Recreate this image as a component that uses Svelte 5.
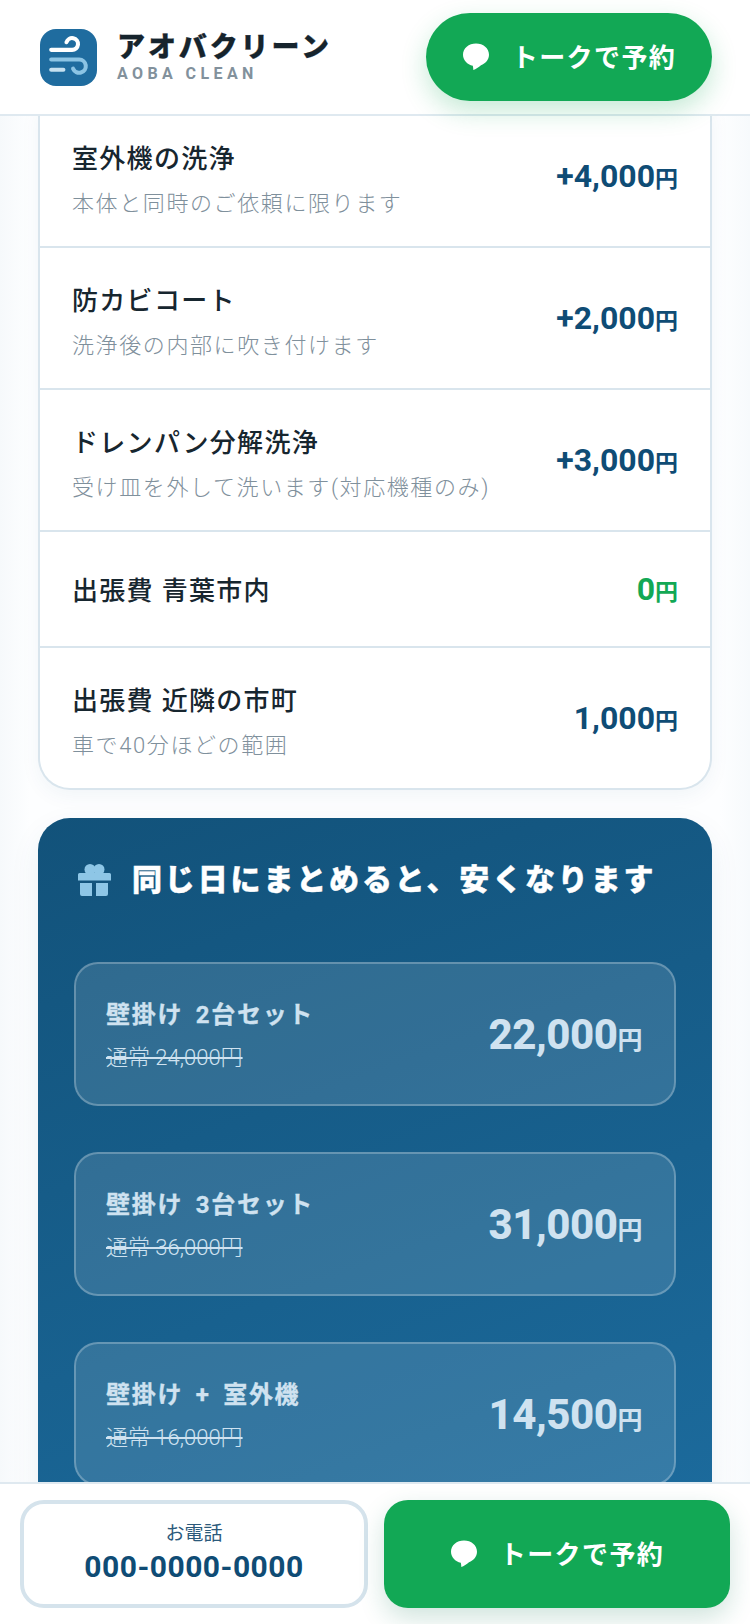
<script lang="ts">
	const options = [
		{ name: '室外機の洗浄', note: '本体と同時のご依頼に限ります', price: '+4,000' },
		{ name: '防カビコート', note: '洗浄後の内部に吹き付けます', price: '+2,000' },
		{ name: 'ドレンパン分解洗浄', note: '受け皿を外して洗います(対応機種のみ)', price: '+3,000' },
		{ name: '出張費 青葉市内', note: '', price: '0', free: true },
		{ name: '出張費 近隣の市町', note: '車で40分ほどの範囲', price: '1,000' }
	];

	const sets = [
		{ name: '壁掛け 2台セット', regular: '通常 24,000円', price: '22,000' },
		{ name: '壁掛け 3台セット', regular: '通常 36,000円', price: '31,000' },
		{ name: '壁掛け + 室外機', regular: '通常 16,000円', price: '14,500' }
	];
</script>

{#snippet talkIcon()}
	<svg class="talk-icon" viewBox="0 0 28 28" aria-hidden="true">
		<path d="M14 .5C6.800.5 1 5.300 1 11.700c0 5.500 4.200 9.800 9.800 11 .4 1.300.5 3 .5 4.300 2.600-1 5.300-2.800 7.700-4.800C23.500 20.500 27 16.500 27 11.700 27 5.300 21.200.5 14 .5z" fill="#fff" />
	</svg>
{/snippet}

<div class="page">
	<header class="top">
		<div class="brand">
			<div class="logo">
				<svg viewBox="0 0 56 56" fill="none" stroke-linecap="round" stroke-width="4" aria-hidden="true">
					<path d="M11 20.500H31.500a5.800 5.800 0 1 0-5.500-7.500" stroke="#fff" />
					<path d="M11 30H38.500a6.500 6.500 0 1 1-6 9" stroke="#8cc4e4" />
					<path d="M11 40H23" stroke="#c5e0f0" />
				</svg>
			</div>
			<div class="brand-text">
				<div class="brand-name">アオバクリーン</div>
				<div class="brand-sub">AOBA CLEAN</div>
			</div>
		</div>
		<button class="talk talk-pill">
			{@render talkIcon()}
			<span>トークで予約</span>
		</button>
	</header>

	<main>
		<section class="options">
			{#each options as opt}
				<div class="option">
					<div class="option-text" class:noted={opt.note}>
						<div class="option-name">{opt.name}</div>
						{#if opt.note}
							<div class="option-note">{opt.note}</div>
						{/if}
					</div>
					<div class="option-price" class:free={opt.free}>{opt.price}<small>円</small></div>
				</div>
			{/each}
		</section>

		<section class="bundle">
			<h2>
				<svg viewBox="0 0 33 32" aria-hidden="true">
					<circle cx="12" cy="5.500" r="5.500" fill="#8ec6e6" />
					<circle cx="21" cy="5.500" r="5.500" fill="#8ec6e6" />
					<path d="M1.500 9h30A1.500 1.500 0 0 1 33 10.500V16.500H0V10.500A1.500 1.500 0 0 1 1.500 9z" fill="#8ec6e6" />
					<path d="M2 19h12v13H4a2 2 0 0 1-2-2z M18 19h12v11a2 2 0 0 1-2 2H18z" fill="#8ec6e6" />
				</svg>
				<span>同じ日にまとめると、安くなります</span>
			</h2>
			<div class="sets">
				{#each sets as set}
					<div class="set">
						<div class="set-text">
							<div class="set-name">{set.name}</div>
							<div class="set-regular">{set.regular}</div>
						</div>
						<div class="set-price">{set.price}<small>円</small></div>
					</div>
				{/each}
			</div>
		</section>
	</main>

	<footer class="bar">
		<button class="tel">
			<span class="tel-label">お電話</span>
			<span class="tel-number">000-0000-0000</span>
		</button>
		<button class="talk talk-wide">
			{@render talkIcon()}
			<span>トークで予約</span>
		</button>
	</footer>
</div>

<style>
	:global(body) {
		margin: 0;
		background: #fff;
	}

	.page {
		position: relative;
		height: 1624px;
		overflow: hidden;
		background: linear-gradient(90deg, #f6f9fb 0%, #fdfeff 4%, #fdfeff 96%, #f7fafc 100%);
		font-family: Roboto, "Noto Sans CJK JP", sans-serif;
		color: #17262f;
	}

	.top {
		position: absolute;
		top: 0;
		left: 0;
		right: 0;
		z-index: 2;
		height: 116px;
		box-sizing: border-box;
		display: flex;
		align-items: center;
		justify-content: space-between;
		padding: 0 38px 0 40px;
		background: #fff;
		border-bottom: 2px solid #dfe9f0;
	}

	.brand {
		display: flex;
		align-items: center;
		gap: 20px;
	}

	.logo {
		width: 57px;
		height: 57px;
		border-radius: 16px;
		background: #1f6c9f;
	}

	.logo svg {
		display: block;
		width: 57px;
		height: 57px;
	}

	.brand-name {
		font-size: 28px;
		line-height: 34px;
		font-weight: 900;
		letter-spacing: 2.9px;
		color: #16242d;
		-webkit-text-stroke: 0.3px #16242d;
	}

	.brand-sub {
		font-size: 16px;
		line-height: 18px;
		font-weight: 700;
		letter-spacing: 4.4px;
		color: #82919c;
	}

	button {
		border: 0;
		font-family: inherit;
		cursor: pointer;
	}

	.talk {
		display: flex;
		align-items: center;
		justify-content: center;
		background: #12a855;
		color: #fff;
		font-weight: 700;
		font-size: 26px;
		letter-spacing: 1.4px;
	}

	.talk span {
		margin-top: -4px;
	}

	.talk-pill {
		width: 286px;
		height: 88px;
		gap: 22px;
		border-radius: 44px;
		box-shadow: 0 10px 26px rgba(18, 168, 85, 0.24);
	}

	.talk-wide {
		flex: 1;
		height: 108px;
		gap: 22px;
		border-radius: 24px;
		box-shadow: 0 10px 26px rgba(18, 120, 85, 0.2);
	}

	.talk-icon {
		width: 28px;
		height: 28px;
		display: block;
	}

	main {
		padding: 106px 38px 0;
		display: flex;
		flex-direction: column;
		gap: 28px;
	}

	.options {
		background: #fff;
		border: 2px solid #d9e5ed;
		border-top: 0;
		border-radius: 0 0 32px 32px;
		box-shadow: 0 6px 20px rgba(20, 70, 110, 0.05);
	}

	.option {
		display: flex;
		align-items: center;
		justify-content: space-between;
		padding: 0 32px;
		min-height: 140px;
		border-top: 2px solid #d9e5ed;
	}

	.option:first-child {
		border-top: 0;
	}

	.option:nth-child(4) {
		min-height: 114px;
	}

	.option-text {
		margin-top: 4px;
	}

	.option-text.noted {
		margin-top: 8px;
	}

	.option-name {
		font-size: 26px;
		line-height: 38px;
		font-weight: 500;
		letter-spacing: 1.3px;
		color: #17262f;
	}

	.option-note {
		margin-top: 10px;
		font-size: 22px;
		line-height: 32px;
		font-weight: 300;
		letter-spacing: 1.6px;
		color: #7f909c;
	}

	.option-price {
		font-size: 32px;
		font-weight: 700;
		color: #0f4c75;
		white-space: nowrap;
	}

	.option-price small {
		font-size: 23px;
		font-weight: 700;
	}

	.option-price.free {
		color: #12a855;
	}

	.bundle {
		padding: 40px 36px 36px;
		border-radius: 32px;
		background: linear-gradient(160deg, #12527a, #1c6b9d);
		box-shadow: 0 12px 30px rgba(15, 76, 117, 0.08);
	}

	.bundle h2 {
		display: flex;
		align-items: center;
		gap: 21px;
		margin: 0 0 60px;
		padding-left: 4px;
		font-size: 30px;
		line-height: 44px;
		font-weight: 900;
		letter-spacing: 2.85px;
		color: #fff;
		-webkit-text-stroke: 0.4px #fff;
	}

	.bundle h2 svg {
		width: 33px;
		height: 32px;
		display: block;
	}

	.sets {
		display: flex;
		flex-direction: column;
		gap: 46px;
	}

	.set {
		display: flex;
		align-items: center;
		justify-content: space-between;
		height: 144px;
		box-sizing: border-box;
		padding: 0 32px 0 30px;
		border: 2px solid rgba(255, 255, 255, 0.25);
		border-radius: 24px;
		background: rgba(255, 255, 255, 0.12);
	}

	.set-text {
		margin-top: 3px;
	}

	.set-name {
		font-size: 24px;
		line-height: 36px;
		font-weight: 700;
		letter-spacing: 1.7px;
		word-spacing: 5px;
		color: #cfe2f0;
		-webkit-text-stroke: 0.3px #cfe2f0;
	}

	.set-regular {
		margin-top: 9px;
		font-size: 22px;
		line-height: 32px;
		font-weight: 300;
		text-decoration: line-through;
		color: #cfe2f0;
	}

	.set-price {
		font-size: 42px;
		font-weight: 800;
		letter-spacing: -0.5px;
		color: #cfe2f0;
		white-space: nowrap;
	}

	.set-price small {
		font-size: 25px;
		font-weight: 700;
	}

	.bar {
		position: absolute;
		left: 0;
		right: 0;
		bottom: 0;
		z-index: 2;
		height: 142px;
		box-sizing: border-box;
		display: flex;
		gap: 16px;
		padding: 16px 20px;
		background: #fff;
		border-top: 2px solid #dfe9f0;
	}

	.tel {
		flex: 0 0 348px;
		height: 108px;
		box-sizing: border-box;
		display: flex;
		flex-direction: column;
		align-items: center;
		justify-content: center;
		background: #fff;
		border: 4px solid #d5e3ec;
		border-radius: 24px;
	}

	.tel-label {
		font-size: 19px;
		line-height: 26px;
		color: #2c5a7b;
	}

	.tel-number {
		font-size: 30px;
		line-height: 40px;
		font-weight: 700;
		letter-spacing: 0.5px;
		color: #0f4c75;
	}
</style>
